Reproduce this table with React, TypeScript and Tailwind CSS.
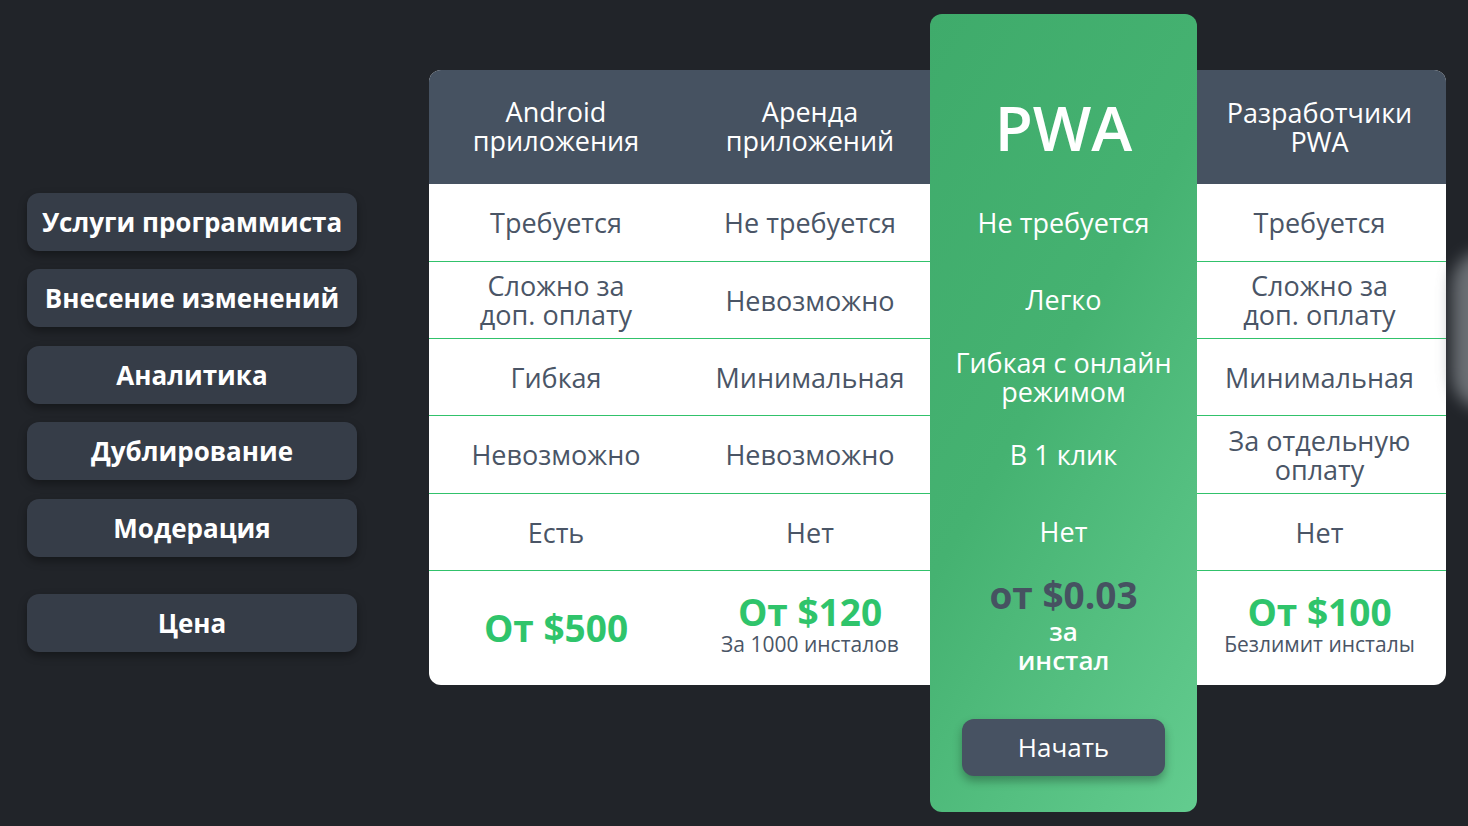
import React from "react";

const font = { fontFamily: '"Open Sans", "Noto Sans", sans-serif' };

const leftButtons: { t: string; mt: string }[] = [
  { t: "Услуги программиста", mt: "mt-0" },
  { t: "Внесение изменений", mt: "mt-[18px]" },
  { t: "Аналитика", mt: "mt-[19px]" },
  { t: "Дублирование", mt: "mt-[18px]" },
  { t: "Модерация", mt: "mt-[19px]" },
  { t: "Цена", mt: "mt-[37px]" },
];

const rows: { a: string[]; b: string[]; p: string[]; d: string[] }[] = [
  { a: ["Требуется"], b: ["Не требуется"], p: ["Не требуется"], d: ["Требуется"] },
  { a: ["Сложно за", "доп. оплату"], b: ["Невозможно"], p: ["Легко"], d: ["Сложно за", "доп. оплату"] },
  { a: ["Гибкая"], b: ["Минимальная"], p: ["Гибкая с онлайн", "режимом"], d: ["Минимальная"] },
  { a: ["Невозможно"], b: ["Невозможно"], p: ["В 1 клик"], d: ["За отдельную", "оплату"] },
  { a: ["Есть"], b: ["Нет"], p: ["Нет"], d: ["Нет"] },
];

function Lines({ lines }: { lines: string[] }) {
  return (
    <div className="flex flex-col items-center text-center">
      {lines.map((l) => (
        <span key={l}>{l}</span>
      ))}
    </div>
  );
}

function Price({ main, sub }: { main: string; sub?: string }) {
  return (
    <div className="flex flex-col items-center justify-center h-full">
      <span className="text-[37px] leading-[38px] font-bold text-[#2fc46b]">{main}</span>
      {sub && <span className="text-[21px] leading-[26px] text-[#4a5566]">{sub}</span>}
    </div>
  );
}

export default function App() {
  return (
    <div
      style={font}
      className="relative h-[826px] w-full overflow-hidden bg-[#212429] flex items-start pt-[14px]"
    >
      {/* smoke decoration on right edge */}
      <div className="absolute left-[1452px] top-[250px] w-[70px] h-[160px] rounded-full bg-[#7d8287] opacity-80 blur-[8px]" />

      {/* left labels */}
      <div className="ml-[27px] mt-[179px] w-[330px] flex flex-col">
        {leftButtons.map((b) => (
          <div
            key={b.t}
            className={`${b.mt} h-[58px] rounded-[12px] bg-[#363d48] shadow-[0_4px_8px_rgba(0,0,0,0.35)] flex items-center justify-center text-white font-bold text-[26px]`}
          >
            {b.t}
          </div>
        ))}
      </div>

      {/* table */}
      <div className="ml-[72px] flex items-start">
        {/* left card */}
        <div className="mt-[56px] w-[508px] rounded-l-[12px] overflow-hidden bg-white text-[27px] leading-[29px]">
          <div className="h-[114px] bg-[#465261] text-white flex">
            <div className="w-[254px] flex items-center justify-center pb-[2px]">
              <Lines lines={["Android", "приложения"]} />
            </div>
            <div className="w-[254px] flex items-center justify-center pb-[2px]">
              <Lines lines={["Аренда", "приложений"]} />
            </div>
          </div>
          {rows.map((r, i) => (
            <div
              key={i}
              className={`flex text-[#4a5566] ${i === 0 ? "h-[77px]" : i === 3 ? "h-[78px] border-t border-[#31c26b]" : "h-[77px] border-t border-[#31c26b]"}`}
            >
              <div className="w-[254px] flex items-center justify-center">
                <Lines lines={r.a} />
              </div>
              <div className="w-[254px] flex items-center justify-center">
                <Lines lines={r.b} />
              </div>
            </div>
          ))}
          <div className="h-[115px] border-t border-[#31c26b] flex">
            <div className="w-[254px]">
              <Price main="От $500" />
            </div>
            <div className="w-[254px] pb-[6px]">
              <Price main="От $120" sub="За 1000 инсталов" />
            </div>
          </div>
        </div>

        {/* PWA column */}
        <div className="relative z-10 -ml-[7px] w-[267px] h-[798px] rounded-[12px] bg-[linear-gradient(120deg,#3fab6b_0%,#45b271_45%,#63cc8f_100%)] text-white text-[27px] leading-[29px] flex flex-col">
          <div className="h-[170px] pt-[56px] flex items-center justify-center">
            <span className="text-[62px] leading-[70px] font-semibold">PWA</span>
          </div>
          {rows.map((r, i) => (
            <div
              key={i}
              className={`${i === 3 ? "h-[78px]" : "h-[77px]"} flex items-center justify-center`}
            >
              <Lines lines={r.p} />
            </div>
          ))}
          <div className="pt-[5px] flex flex-col items-center">
            <span className="text-[37px] leading-[40px] font-bold text-[#465261]">от $0.03</span>
            <span className="mt-[2px] font-semibold text-[26px]">за</span>
            <span className="font-semibold text-[26px]">инстал</span>
          </div>
          <div className="mt-[44px] flex justify-center">
            <div className="w-[203px] h-[57px] rounded-[12px] bg-[#475262] shadow-[0_5px_10px_rgba(0,0,0,0.3)] flex items-center justify-center text-white text-[26px]">
              Начать
            </div>
          </div>
        </div>

        {/* right card */}
        <div className="mt-[56px] w-[249px] rounded-r-[12px] overflow-hidden bg-white text-[27px] leading-[29px]">
          <div className="h-[114px] bg-[#465261] text-white flex items-center justify-center pr-[4px] pb-[1px]">
            <Lines lines={["Разработчики", "PWA"]} />
          </div>
          {rows.map((r, i) => (
            <div
              key={i}
              className={`flex items-center justify-center pr-[4px] text-[#4a5566] ${i === 0 ? "h-[77px]" : i === 3 ? "h-[78px] border-t border-[#31c26b]" : "h-[77px] border-t border-[#31c26b]"}`}
            >
              <Lines lines={r.d} />
            </div>
          ))}
          <div className="h-[115px] border-t border-[#31c26b] pb-[6px] pr-[4px]">
            <Price main="От $100" sub="Безлимит инсталы" />
          </div>
        </div>
      </div>
    </div>
  );
}
